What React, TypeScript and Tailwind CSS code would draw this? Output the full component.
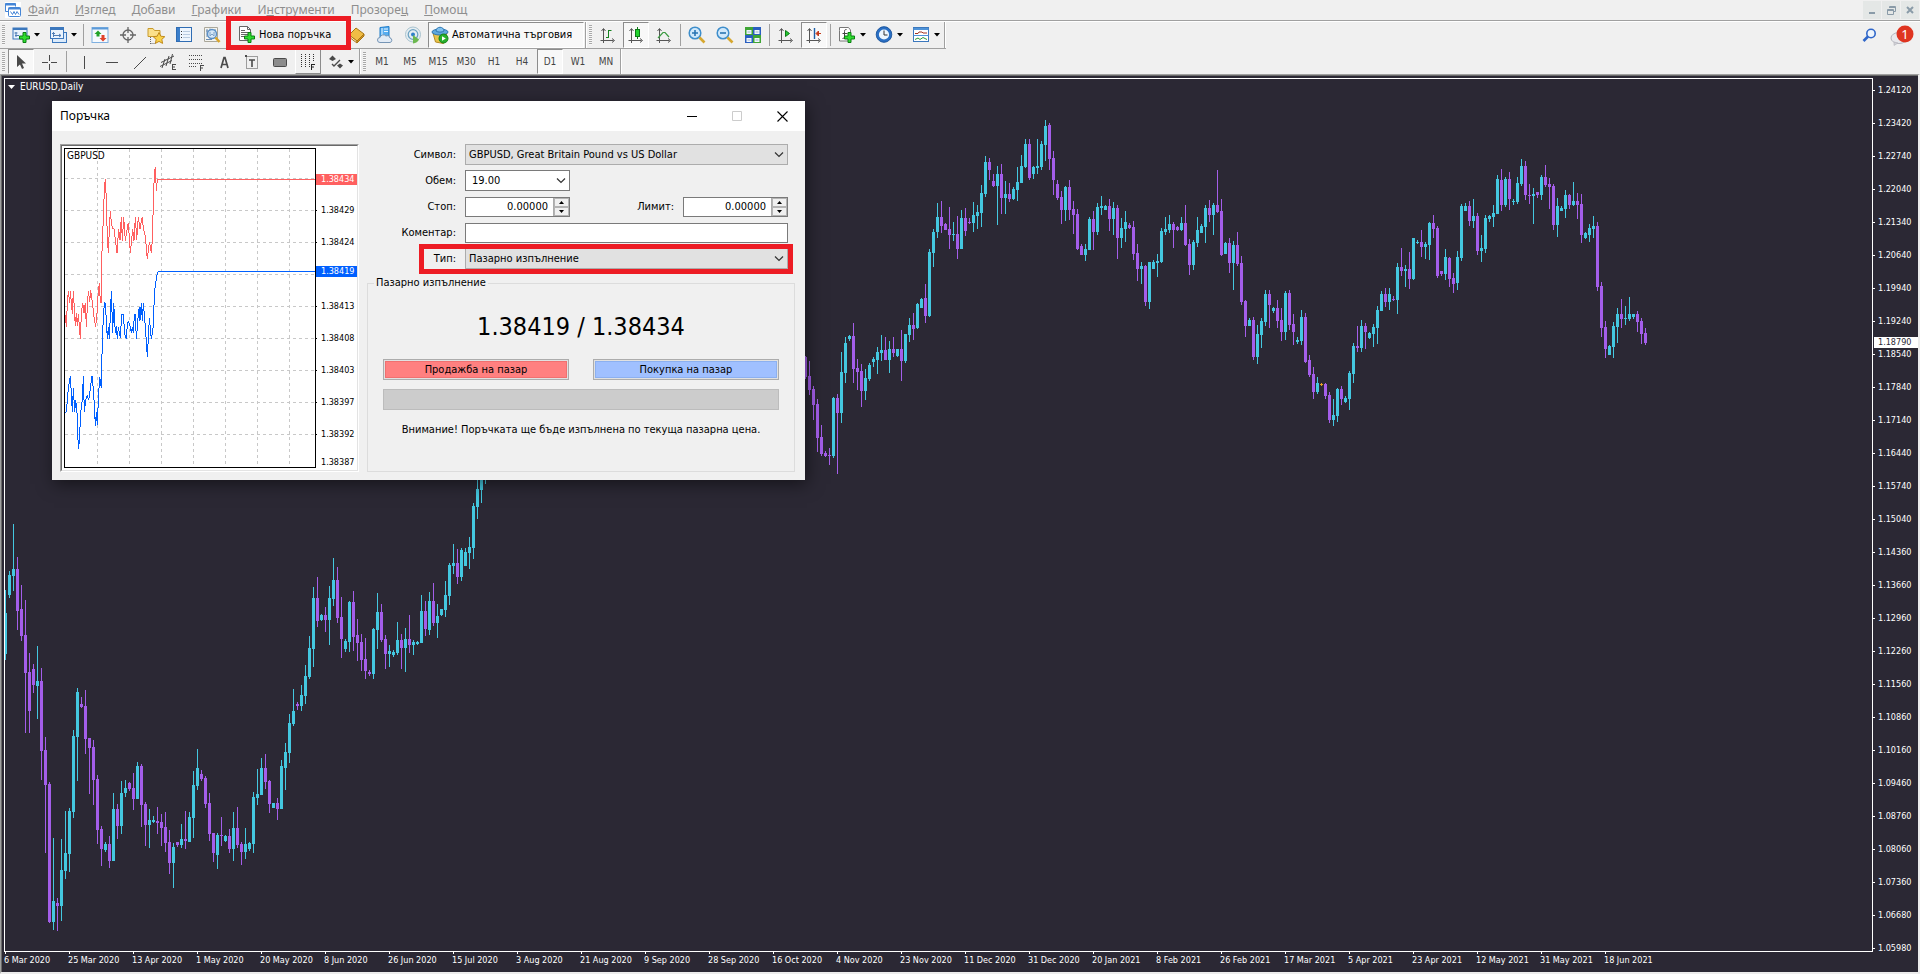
import type { ReactNode } from "react";

const UI = "font-['DejaVu_Sans_Condensed','Noto_Sans',sans-serif]";
const SEGOE = "font-['Noto_Sans','Open_Sans',sans-serif]";

/* ---------- market data ---------- */

// Each candle: direction (c = up, p = down, o = doji), high, body top, body bottom, low.
// Values are in sub-units of a third of a pixel, measured down from the group's origin.
const CANDLE_GROUPS = [
  {
    start: 0,
    origin: 421,
    rows:
      "c270 339 462 480;c213 225 285 294;c72 207 228 273;p171 207 333 390;p255 327 408 423;p300 405 519 699;p459 516 633 699;p492 507 555 579;c438 543 558 657;p504 543 753 840;p711 750 855 1059;p846 852 1266 1269;c1014 1203 1266 1290;p1194 1209 1218 1293;c1017 1110 1218 1263;c933 1059 1113 1137;c924 933 1062 1116;c690 708 936 954;c564 576 711 843;p591 612 621 624;p570 618 717 762;p714 714 744 882;p720 741 840 915;p825 837 990 1032;p978 987 1047 1098;c1026 1032 1050 1056;p1008 1032 1083 1104;c879 927 1083 1083;p912 927 978 1017;c843 879 978 1002;c840 864 879 891;p846 849 867 873;p819 864 897 930;c786 798 897 897;p792 798 915 981;p906 912 975 1038;c927 960 975 1044;c948 960 966 969;p921 963 969 1002;p942 966 984 1038;p936 981 1029 1056;p990 1026 1089 1122;c1029 1041 1089 1164;p1026 1026 1035 1041;c972 1017 1035 1044;p933 1017 1023 1047;c936 951 1026 1026;c813 855 954 1014;c747 804 858 870;p810 822 837 843;p828 834 912 924;p879 909 1002 1023;p999 999 1059 1086;c999 1005 1065 1107;p951 1005 1008 1038;c1005 1008 1023 1026;p987 1008 1047 1059;c936 984 1047 1083;p921 984 1035 1044;p1026 1032 1056 1095;c984 1032 1056 1077;c1026 1029 1047 1053;c876 891 1032 1059;c807 882 894 915;c774 804 885 885;p762 804 846 867;p840 843 912 939;c909 909 924 924;p894 909 927 960;c780 798 927 927;c729 756 804 870;c642 669 759 789;c567 633 672 678;p606 612 618 630;c555 585 618 633;c495 528 588 612;c408 444 531 537;c261 294 447 501;p231 294 363 381;c342 345 360 363;p321 345 360 396;c258 294 360 435;c174 240 297 318;p201 240 354 369;p291 351 417 474;c417 423 447 456;c303 306 426 456;p273 306 411 453;p357 405 429 483;p402 426 480 513;p414 477 513 537;p510 516 522 528;c384 387 522 537;c279 336 390 447;p312 336 420 426;p405 417 462 507;c435 453 462 501;c450 456 465 471;c366 420 459 465;p402 420 444 507;c384 417 444 516;p345 417 435 459;c420 426 435 465;c423 426 432 435;c285 333 429 429;p303 333 387 408;c276 303 390 405;p249 303 369 378;c312 348 369 414;c327 327 345 348;c243 285 330 351;c189 195 288 315;c132 189 198 222;p147 189 231 252;c144 150 231 243;c144 156 198 198;c111 141 159 207;c9 18 144 177;c-75 -33 21 57;c-90 -75 -30 9;c-90 -90 -60 -48",
  },
  {
    start: 200,
    origin: 21,
    rows:
      "p768 771 831 837;p783 828 870 885;p858 867 915 960;p897 912 1014 1056;p975 1011 1062 1068;p1053 1059 1068 1071;p1044 1065 1068 1095;c891 894 1068 1074;p882 894 939 1122;c756 816 939 969;c711 729 819 849;c705 708 717 723;p669 708 807 849;p777 804 816 870;p792 813 873 921;c807 834 873 900;c789 795 837 843;c771 777 786 801;c741 756 780 822;c705 750 759 783;p711 750 780 780;c723 747 780 819;p711 747 759 771;c747 747 768 771;p690 747 783 843;c702 702 783 789;c654 675 705 726;p639 675 687 720;c609 612 684 687;c594 597 624 624;p552 594 648 669;c447 456 648 651;c387 396 459 501;c309 351 396 414;p303 351 378 399;p369 372 390 390;p321 387 405 447;c366 402 405 423;p348 402 447 477;c330 354 447 447;p324 354 393 408;p354 366 369 372;c306 345 369 396;c315 336 348 387;c255 279 339 381;c168 186 282 291;p174 186 210 240;p222 243 258 261;c198 222 258 375;p192 222 294 342;c243 282 294 342;p249 282 297 306;c261 267 297 300;c201 246 270 303;c165 198 249 249;c117 132 201 204;p117 132 234 240;c198 201 222 237;c117 198 204 222;c123 132 201 210;c60 78 135 183;p69 75 177 210;p153 174 240 285;p240 252 294 300;p273 291 330 372;c258 261 330 363;p240 261 330 360;p303 327 345 402;p327 342 447 450;p432 438 465 465;c432 447 465 483;c351 357 450 450;p333 357 396 450;c309 321 396 405;c288 318 324 345;c315 318 330 330;p297 318 357 393;c306 324 357 405;p315 324 414 477;c354 384 414 444;c333 366 387 426;p369 375 384 387;p363 381 462 480;p432 459 507 543;c486 498 507 552;p495 498 606 618;c486 486 606 627;c480 486 507 507;c462 483 489 531",
  },
  {
    start: 289,
    origin: 51,
    rows:
      "c294 303 396 399;c261 297 306 315;c255 282 300 309;p276 282 300 354;p288 291 300 303;c261 279 300 303;p225 279 345 348;p327 342 405 435;c330 336 405 420;c261 300 339 351;c282 288 309 309;c225 234 291 339;p210 234 255 276;c219 225 255 315;p120 225 246 249;p207 243 375 378;c336 339 372 372;p324 339 399 429;c333 345 399 480;p306 345 402 408;p378 399 516 525;p510 513 588 621;c564 570 588 588;p561 570 681 690;c585 612 681 702;c564 573 615 654;c480 492 576 588;p480 492 525 594;c531 534 543 549;p510 534 573 594;p534 570 606 633;c483 489 606 630;p480 489 585 600;p552 582 606 645;c621 630 636 642;c540 561 633 645;p549 561 696 699;p675 690 735 741;p711 732 786 807;c741 759 786 792;o759 762 765 768;p759 762 798 807;p786 795 870 879;c807 855 870 888;c774 777 858 876;p768 777 807 825;c798 804 816 819;c723 729 807 840;c639 648 732 759;p588 648 654 666;c570 588 654 666;p579 588 606 657;c606 609 624 627;c582 591 612 651;c528 540 594 642;c483 492 543 543;p474 492 516 531;c474 492 516 540;p498 507 510 513;c399 411 510 552;p354 411 423 438;c405 417 423 471;p366 417 447 477;c324 324 447 450;c330 336 339 342;p300 336 351 381;c336 342 351 387;c276 279 345 390;p255 279 297 324;p288 294 438 444;p423 423 432 438;c357 381 432 450;p381 384 447 471;p429 444 462 489;c363 381 459 480;c222 228 384 393;c219 228 243 243;p213 228 273 288;c207 258 273 294;p249 258 363 375;c315 354 363 396;c255 264 357 369;c255 258 267 276;c225 249 261 291;c135 147 252 252;p117 150 225 243;c141 147 225 231;p126 147 207 240;c207 213 216 225;c141 159 216 222;c87 108 162 168;p93 108 195 210;p162 195 198 222;c174 192 198 282;p186 186 195 204;c135 141 195 210;p105 141 165 171;p144 162 171 237;p162 168 285 300;c204 228 285 321;c228 234 243 243;c180 195 237 264;p192 195 225 237;c156 213 225 228;p189 213 225 267;p192 222 315 339;c306 309 324 327;c282 294 315 336;c258 288 297 324;p276 288 471 483;p456 468 594 621;p573 591 657 684;c645 648 675 675;c576 588 651 684;c534 552 591 639;p507 552 567 594;c528 564 567 585;c501 552 567 573;c552 552 561 567;p543 552 576 606;p564 573 612 642;p594 609 639 645",
  },
];

const COLORS: Record<string, string> = { c: "#44c8e0", p: "#a45eea", o: "#e8a020" };

const CANDLES = CANDLE_GROUPS.flatMap((g) =>
  g.rows.split(";").map((row, i) => {
    const [high, top, bottom, low] = row
      .slice(1)
      .split(" ")
      .map((v) => g.origin + Math.round(Number(v) / 3));
    return { x: (g.start + i) * 4, color: COLORS[row[0]], high, top, bottom, low };
  })
);

const PRICES = [
  "1.24120", "1.23420", "1.22740", "1.22040", "1.21340", "1.20640", "1.19940", "1.19240", "1.18540",
  "1.17840", "1.17140", "1.16440", "1.15740", "1.15040", "1.14360", "1.13660", "1.12960", "1.12260",
  "1.11560", "1.10860", "1.10160", "1.09460", "1.08760", "1.08060", "1.07360", "1.06680", "1.05980",
];

const DATES = [
  "6 Mar 2020", "25 Mar 2020", "13 Apr 2020", "1 May 2020", "20 May 2020", "8 Jun 2020", "26 Jun 2020",
  "15 Jul 2020", "3 Aug 2020", "21 Aug 2020", "9 Sep 2020", "28 Sep 2020", "16 Oct 2020", "4 Nov 2020",
  "23 Nov 2020", "11 Dec 2020", "31 Dec 2020", "20 Jan 2021", "8 Feb 2021", "26 Feb 2021", "17 Mar 2021",
  "5 Apr 2021", "23 Apr 2021", "12 May 2021", "31 May 2021", "18 Jun 2021",
];

const ASK =
  "10,465 13,500 16,430 19,392 23,428 25,392 28,428 31,462 34,392 38,465 40,498 43,460 46,498 49,462 52,498 55,538 58,462 62,428 66,458 70,428 73,500 76,440 79,392 83,425 86,390 91,428 97,480 101,500 105,460 109,392 112,370 115,428 118,428 121,200 124,195 127,80 130,58 133,120 136,235 139,280 142,208 145,152 148,190 152,206 156,206 160,240 165,280 170,206 174,240 178,170 181,242 185,170 190,242 195,210 199,188 205,280 212,208 216,242 220,170 224,240 229,170 234,206 241,170 244,206 250,230 256,298 262,245 268,278 271,240 274,130 277,40 280,22 283,94 286,58 760,58";
const BID =
  "10,757 13,757 16,720 19,685 25,647 31,757 34,685 38,757 41,720 45,757 49,868 52,845 56,757 61,720 64,647 67,757 71,720 76,705 80,720 85,685 90,647 95,700 100,797 103,757 106,795 109,720 113,650 118,685 121,530 127,428 130,430 136,538 139,500 142,538 148,392 152,520 155,428 160,520 163,498 166,538 169,500 175,535 179,463 184,463 188,520 193,538 196,490 199,482 205,500 208,520 211,500 214,520 217,463 220,463 223,538 229,463 232,440 234,482 238,428 241,482 244,428 250,500 256,592 262,475 268,538 274,498 277,405 280,375 286,340 290,334 760,334";

/* ---------- icons ---------- */

function Svg({ children, s = 18 }: { children: ReactNode; s?: number }) {
  return (
    <svg width={s} height={s} viewBox={`0 0 ${s} ${s}`} fill="none" aria-hidden="true" className="shrink-0">
      {children}
    </svg>
  );
}

function Plus({ x, y }: { x: number; y: number }) {
  return (
    <path
      transform={`translate(${x} ${y})`}
      d="M4 .5h3v3.500h3.500v3H7v3.500H4V7H.5V4H4z"
      fill="#2fdd2f"
      stroke="#0a7d12"
    />
  );
}

function Axes() {
  return (
    <path d="M4.500 3v14M1.500 14.500h13M2.500 5l2-2.500 2 2.500M13 12.500l2.500 2-2.500 2" stroke="#555" />
  );
}

const ICONS: Record<string, ReactNode> = {
  app: (
    <Svg s={16}>
      <rect width="16" height="16" fill="#fff" />
      <path d="M.5 1.500h10v3M.5 1.500v8h3" stroke="#4585d6" />
      <path d="M.5 2.500h10" stroke="#4585d6" strokeWidth="2" />
      <rect x="3.500" y="5.500" width="12" height="9" rx="1" fill="#fff" stroke="#4585d6" />
      <path d="M3.500 6.500h12" stroke="#4585d6" strokeWidth="2" />
      <path d="M5.500 9.500l2 3 1.500-3 1.500 3 1.500-3 2 3" stroke="#4585d6" />
    </Svg>
  ),
  newChart: (
    <Svg>
      <rect x="1" y="2" width="14" height="11" fill="#eaf3fd" stroke="#3c78bd" />
      <path d="M1 3h14" stroke="#3c78bd" strokeWidth="2" />
      <path d="M4 6v5M3 9.500h4M2.500 7h3" stroke="#4f7db5" />
      <Plus x={7} y={6} />
    </Svg>
  ),
  profiles: (
    <Svg>
      <rect x="3.500" y="6.500" width="14" height="10" fill="#dcebfb" stroke="#3c78bd" />
      <rect x="1.500" y="1.500" width="13" height="11" fill="#eaf3fd" stroke="#3c78bd" />
      <path d="M1 3h14" stroke="#3c78bd" strokeWidth="2" />
      <path d="M4.500 6v5M3 7.500h3M4 9.500h8M10 8l2 1.500-2 1.500" stroke="#4f7db5" />
    </Svg>
  ),
  watch: (
    <Svg>
      <rect x="1" y="1.500" width="16" height="15" fill="#f6fafe" stroke="#7fb0e0" />
      <path d="M1 2.500h16" stroke="#5c9ad8" strokeWidth="2" />
      <path d="M7 4.500L10.500 8H8.500v2.500h-3V8h-2z" fill="#22a32a" />
      <path d="M12 15.500L8.500 12h2V9h3v3h2z" fill="#e0432c" />
    </Svg>
  ),
  target: (
    <Svg>
      <circle cx="9" cy="9" r="5" stroke="#666" strokeWidth="1.300" />
      <path d="M9 1v6M9 11v6M1 9h6M11 9h6" stroke="#666" strokeWidth="1.300" />
    </Svg>
  ),
  folder: (
    <Svg s={20}>
      <path d="M2 3.500h5l1.500 2H14v6H2z" fill="#fbe08a" stroke="#c89a2c" />
      <path d="M4.500 12v7M4.500 18.500h5" stroke="#666" strokeDasharray="1 1" />
      <path d="M13 7.500l1.800 3.700 4 .5-3 2.700.8 4-3.600-2-3.600 2 .8-4-3-2.700 4-.5z" fill="#fad34a" stroke="#c18a1a" />
    </Svg>
  ),
  panel: (
    <Svg>
      <rect x="1.500" y="1.500" width="15" height="14" fill="#eef5fd" stroke="#2f6cb3" />
      <rect x="2" y="2" width="3" height="13" fill="#3b7fcb" />
      <path d="M8 5.500h7M8 8.500h7M8 11.500h7" stroke="#b9cbe0" />
      <path d="M6 5.500h1M6 8.500h1M6 11.500h1" stroke="#333" />
    </Svg>
  ),
  tester: (
    <Svg>
      <path d="M1.500 1.500h13v14h-13z" fill="#f4f4f0" stroke="#aaa79a" />
      <path d="M4 3v8M3 5h2M7 2.500v3M12 3v4M3 13.500h6" stroke="#6c8cb0" />
      <circle cx="9" cy="8" r="4.500" fill="#cfe5fa" fillOpacity=".8" stroke="#5b8fc6" strokeWidth="1.400" />
      <path d="M7 6v4l2-2 2 2V6" stroke="#7fa3c8" />
      <path d="M12.500 11.500l4 4.500" stroke="#d9a52b" strokeWidth="2.600" />
    </Svg>
  ),
  order: (
    <Svg>
      <path d="M1.500.5h8l3 3v11h-11z" fill="#fff" stroke="#666" />
      <path d="M9.500.5v3h3M3 4.500h4M3 6.500h7M3 8.500h7M3 10.500h4" stroke="#666" />
      <Plus x={6} y={6} />
    </Svg>
  ),
  book: (
    <Svg>
      <path d="M1 9l7-7 8 6-7 7z" fill="#f0bd45" stroke="#a87514" />
      <path d="M1 9l8 6v2L1 11z" fill="#fff3cf" stroke="#a87514" />
      <path d="M9 15l7-7v2l-7 7z" fill="#cf9324" stroke="#a87514" />
    </Svg>
  ),
  cloud: (
    <Svg>
      <path d="M4 1.500l9-1v11H4z" fill="#58aef0" stroke="#1e7cc9" />
      <path d="M8 3h4M8 5.500h4M6 2v9" stroke="#e9f5ff" />
      <path d="M4 16.500a2.500 2.500 0 010-5 3.500 3.500 0 016-1.500 3 3 0 014 2 2.300 2.300 0 010 4.500z" fill="#e2ebf5" stroke="#7695b5" />
    </Svg>
  ),
  signal: (
    <Svg>
      <circle cx="9" cy="8.500" r="7.500" fill="#e6eef2" stroke="#a9c3cf" />
      <circle cx="9" cy="8.500" r="4.800" stroke="#6fa3c2" strokeWidth="1.300" />
      <circle cx="9" cy="8.500" r="2" fill="#2f80c8" />
      <path d="M9 9v8.500c3-.5 5-1.500 6-4z" fill="#6cb84f" />
    </Svg>
  ),
  auto: (
    <Svg>
      <path d="M2 7l2.500 9 8 1.500L16 7z" fill="#e9c34c" stroke="#b48a22" />
      <ellipse cx="9" cy="6" rx="8" ry="3" fill="#5fa8dd" stroke="#2d76b1" />
      <path d="M5 5c0-5 8-5 8 0-2 1.500-6 1.500-8 0z" fill="#7fc0ee" stroke="#2d76b1" />
      <circle cx="12.500" cy="12.500" r="4.500" fill="#27b02c" stroke="#12821a" />
      <path d="M11 10.300v4.400l3.800-2.200z" fill="#fff" />
    </Svg>
  ),
  bars: (
    <Svg>
      <Axes />
      <path d="M9.500 4v8M9.500 4.500h3M7 11.500h3" stroke="#15831f" />
    </Svg>
  ),
  candles: (
    <Svg>
      <Axes />
      <path d="M10.500 1v12" stroke="#0d7a17" />
      <rect x="8.500" y="3.500" width="4" height="7" fill="#20d32c" stroke="#0d7a17" />
    </Svg>
  ),
  line: (
    <Svg>
      <Axes />
      <path d="M3 12l5-5.500h2L14 11" stroke="#3a9a41" strokeWidth="1.200" />
    </Svg>
  ),
  zoomIn: (
    <Svg>
      <circle cx="7" cy="7" r="5.800" fill="#cfe8fb" stroke="#3e8ecb" strokeWidth="1.500" />
      <path d="M4 7h6M7 4v6" stroke="#2874b3" strokeWidth="1.600" />
      <path d="M11.500 11.500l5 5" stroke="#d6a72f" strokeWidth="2.600" />
    </Svg>
  ),
  zoomOut: (
    <Svg>
      <circle cx="7" cy="7" r="5.800" fill="#cfe8fb" stroke="#3e8ecb" strokeWidth="1.500" />
      <path d="M4 7h6" stroke="#2874b3" strokeWidth="1.600" />
      <path d="M11.500 11.500l5 5" stroke="#d6a72f" strokeWidth="2.600" />
    </Svg>
  ),
  tile: (
    <Svg>
      <path d="M1 1h8v8H1zM9 9h8v8H9z" fill="#3fa535" />
      <path d="M9 1h8v8H9zM1 9h8v8H1z" fill="#2a5fc0" />
      <path d="M2.500 4h5v4h-5zM10.500 4h5v4h-5zM2.500 12h5v4h-5zM10.500 12h5v4h-5z" fill="#f2f7fd" />
      <path d="M3.500 6h3M11.500 6h3M3.500 14h3M11.500 14h3" stroke="#9cb3cf" />
    </Svg>
  ),
  scroll: (
    <Svg>
      <Axes />
      <path d="M8.500 4.500v6l4-3z" fill="#22c92e" stroke="#0d7a17" />
    </Svg>
  ),
  shift: (
    <Svg>
      <Axes />
      <path d="M9.500 2v11" stroke="#1d5fa8" strokeWidth="1.400" />
      <path d="M16 7.500h-4M13.500 5L11 7.500l2.500 2.500z" stroke="#c43a1a" fill="#c43a1a" />
    </Svg>
  ),
  indicators: (
    <Svg>
      <path d="M1.500 4.500v-3h9l2 2.500v11h-11z" fill="#fff" stroke="#777" />
      <path d="M8.500 3.500c-2 0-2 1-2 2v5c0 1-.5 2-2 2M4.500 7.500h5" stroke="#444" />
      <Plus x={6} y={6} />
    </Svg>
  ),
  clock: (
    <Svg>
      <circle cx="9" cy="8.500" r="6.500" fill="#edf6ff" stroke="#2a6fc4" strokeWidth="2.800" />
      <circle cx="9" cy="8.500" r="7.800" stroke="#174f96" strokeWidth=".8" />
      <path d="M9 4.500v4.500h3.500" stroke="#333" />
    </Svg>
  ),
  template: (
    <Svg>
      <rect x="1.500" y="1.500" width="15" height="14" fill="#fff" stroke="#3c78bd" />
      <path d="M1.500 3h15" stroke="#4f93d8" strokeWidth="2" />
      <path d="M1.500 9.500h15" stroke="#4f93d8" />
      <path d="M3 7.500h3l1-1.500h3l1 1h4" stroke="#a3331f" />
      <path d="M3 13.500l3-1.500 2 1.500 3-2 4 2" stroke="#2b9a35" />
    </Svg>
  ),
  cursor: (
    <Svg s={16}>
      <path d="M4 1v12l3-2.500L9 15l2-1-2-4.500h4z" fill="#4a4a4a" />
    </Svg>
  ),
  cross: (
    <Svg s={16}>
      <path d="M8.500 1v6M8.500 10v6M1 8.500h6M10 8.500h6" stroke="#4a4a4a" />
    </Svg>
  ),
  vline: (
    <Svg s={16}>
      <path d="M8.500 2v13" stroke="#4a4a4a" />
    </Svg>
  ),
  hline: (
    <Svg s={16}>
      <path d="M2 8.500h12" stroke="#4a4a4a" />
    </Svg>
  ),
  trend: (
    <Svg s={16}>
      <path d="M2 15L14 3" stroke="#4a4a4a" />
    </Svg>
  ),
  channel: (
    <Svg s={18}>
      <path d="M2 9.500L15 3M1 13.500L13 7.500M3 15l3-9M7 13l3-10M11 11l2.500-10" stroke="#4a4a4a" />
      <path d="M13 11.500h4M13 14h3M13 16.500h4M13.500 11v6" stroke="#4a4a4a" />
    </Svg>
  ),
  fibo: (
    <Svg s={18}>
      <path d="M2 2.500h14M2 6.500h14M2 10.500h14M2 13.500h8" stroke="#4a4a4a" strokeDasharray="1 1" />
      <path d="M13.500 12v6M13 12.500h4M13 15h3" stroke="#4a4a4a" />
    </Svg>
  ),
  textA: (
    <Svg s={16}>
      <path d="M5 14L8 3.500h1L12 14M6 10.500h5" stroke="#4a4a4a" strokeWidth="1.700" />
    </Svg>
  ),
  label: (
    <Svg s={16}>
      <rect x="2.500" y="2.500" width="11" height="12" stroke="#4a4a4a" strokeDasharray="1 1" />
      <path d="M5 6h6M8 6v7" stroke="#4a4a4a" strokeWidth="1.600" />
      <path d="M1 1h2v2H1z" fill="#4a4a4a" />
    </Svg>
  ),
  rect: (
    <Svg s={16}>
      <rect x="1.500" y="4.500" width="13" height="8" rx="1" fill="#8c8c8c" stroke="#4a4a4a" />
    </Svg>
  ),
  cycles: (
    <Svg s={18}>
      <path d="M2.500 1v14M6.500 1v14M10.500 1v14M14.500 1v8" stroke="#333" strokeDasharray="1 1" />
      <path d="M12.500 11v6M12 11.500h4M12 14h3" stroke="#222" />
    </Svg>
  ),
  arrows: (
    <Svg s={16}>
      <path d="M1 5l3.500-3.500L8 5 4.500 7zM9 11.500l3-2 3 2-3 3z" fill="#4a4a4a" />
      <path d="M4 10l2 2 6-6" stroke="#4a4a4a" strokeWidth="1.400" />
    </Svg>
  ),
};

/* ---------- toolbar parts ---------- */

function Caret() {
  return (
    <svg width="6" height="4" viewBox="0 0 6 4" aria-hidden="true" className="shrink-0">
      <path d="M0 0h6L3 3.500z" fill="#000" />
    </svg>
  );
}

const Grip = () => (
  <div className="w-[7px] shrink-0 py-[3px] pl-0.5">
    <div className="h-full w-[3px] bg-[repeating-linear-gradient(to_bottom,#a8a8a8_0_1px,#f8f8f8_1px_2px)]" />
  </div>
);

const Sep = () => (
  <div className="flex w-[5px] shrink-0 justify-center py-0.5">
    <div className="w-px bg-[#a0a0a0]" />
  </div>
);

const End = () => <div className="w-0.5 shrink-0 border-r border-l border-r-white border-l-[#a0a0a0]" />;

function Tool({ icon, label, on, raised }: { icon: string; label: string; on?: boolean; raised?: boolean }) {
  const look = on
    ? "border-t-[#8c8c8c] border-l-[#8c8c8c] border-r-white border-b-white bg-[#f8f8f8]"
    : raised
      ? "border-t-white border-l-white border-r-[#8c8c8c] border-b-[#8c8c8c]"
      : "border-transparent";
  return (
    <div className="flex w-7 shrink-0 px-px">
      <button type="button" aria-label={label} className={`flex flex-1 items-center justify-center border ${look}`}>
        {ICONS[icon]}
      </button>
    </div>
  );
}

function DropTool({ icon, label }: { icon: string; label: string }) {
  return (
    <button type="button" aria-label={label} className="flex w-[37px] shrink-0 items-center justify-center gap-1">
      {ICONS[icon]}
      <Caret />
    </button>
  );
}

const MENU: [string, string, string][] = [
  ["", "Ф", "айл"],
  ["", "И", "зглед"],
  ["", "Д", "обави"],
  ["", "Г", "рафики"],
  ["И", "н", "струменти"],
  ["Прозоре", "ц", ""],
  ["", "П", "омощ"],
];

function MenuBar() {
  return (
    <div className={`flex h-[22px] shrink-0 border-b border-b-white ${SEGOE}`}>
      <div className="flex flex-1 items-center border-b border-[#a0a0a0] pr-px pl-[5px]">
        {ICONS.app}
        <nav className="ml-[7px] flex flex-1 gap-4 text-[12px] leading-5 text-[#8e8e8e]">
          {MENU.map(([a, u, b]) => (
            <button type="button" key={a + u + b}>
              {a}
              <span className="underline">{u}</span>
              {b}
            </button>
          ))}
        </nav>
        <div className="flex gap-px text-[#8a9ba8]">
          <button type="button" aria-label="Минимизирай" className="flex h-[18px] w-[18px] items-center justify-center bg-[#e4e7e6]">
            <svg width="8" height="8" aria-hidden="true"><path d="M1 7h6" stroke="currentColor" strokeWidth="2" /></svg>
          </button>
          <button type="button" aria-label="Възстанови" className="flex h-[18px] w-[18px] items-center justify-center bg-[#e4e7e6]">
            <svg width="9" height="9" fill="none" stroke="currentColor" aria-hidden="true"><path d="M2.500 2V.5h6v5H7M.5 3.500h6v5h-6zM.5 4.500h6M2.500 1.500h6" /></svg>
          </button>
          <button type="button" aria-label="Затвори" className="flex h-[18px] w-[18px] items-center justify-center bg-[#e4e7e6]">
            <svg width="8" height="8" aria-hidden="true"><path d="M1 1l6 6M7 1L1 7" stroke="currentColor" strokeWidth="2" /></svg>
          </button>
        </div>
      </div>
    </div>
  );
}

function MainToolbar() {
  return (
    <div className="flex h-[27px] shrink-0">
      <div className="flex border-b border-[#a0a0a0]">
        <Grip />
        <DropTool icon="newChart" label="Нова графика" />
        <DropTool icon="profiles" label="Профили" />
        <Sep />
        <Tool icon="watch" label="Пазарен преглед" />
        <Tool icon="target" label="Данни" />
        <Tool icon="folder" label="Навигатор" />
        <Tool icon="panel" label="Терминал" />
        <Tool icon="tester" label="Тестер" />
        <div className="relative flex w-[117px] shrink-0">
          <button type="button" className={`flex flex-1 items-center gap-[3px] pl-3 text-[11px] ${UI}`}>
            {ICONS.order}
            <span className="whitespace-nowrap">Нова поръчка</span>
          </button>
          <div className="pointer-events-none absolute -top-1.5 left-0 z-10 h-[34px] w-[125px] border-[5px] border-[#ed1c24]" />
        </div>
        <Tool icon="book" label="Редактор" />
        <Tool icon="cloud" label="Облак" />
        <Tool icon="signal" label="Сигнали" />
        <button
          type="button"
          className={`mx-px flex w-[156px] shrink-0 items-center gap-[3px] border border-t-[#8c8c8c] border-r-white border-b-white border-l-[#8c8c8c] bg-[#f8f8f8] pl-0.5 text-[11px] ${UI}`}
        >
          {ICONS.auto}
          <span className="whitespace-nowrap">Автоматична търговия</span>
        </button>
        <End />
        <Grip />
        <Tool icon="bars" label="Барове" />
        <Tool icon="candles" label="Свещи" on />
        <Tool icon="line" label="Линия" />
        <Sep />
        <Tool icon="zoomIn" label="Увеличи" />
        <Tool icon="zoomOut" label="Намали" />
        <Tool icon="tile" label="Подреди" />
        <Sep />
        <Tool icon="scroll" label="Автоматично превъртане" />
        <Tool icon="shift" label="Отместване" on />
        <Sep />
        <DropTool icon="indicators" label="Индикатори" />
        <DropTool icon="clock" label="Периоди" />
        <DropTool icon="template" label="Шаблони" />
        <End />
      </div>
      <div className="flex flex-1 items-center justify-end gap-3 pr-1.5">
        <button type="button" aria-label="Търсене">
          <svg width="15" height="15" viewBox="0 0 15 15" fill="none" aria-hidden="true">
            <circle cx="9" cy="5.500" r="4.200" fill="#eef5fd" stroke="#2f66c9" strokeWidth="1.600" />
            <path d="M6 8.500l-4.500 4.500" stroke="#2f66c9" strokeWidth="2.600" />
          </svg>
        </button>
        <button type="button" aria-label="Съобщения" className="relative h-[22px] w-[25px]">
          <svg width="25" height="22" viewBox="0 0 25 22" fill="none" aria-hidden="true">
            <ellipse cx="10" cy="13" rx="8" ry="5.500" fill="#e9e9ed" stroke="#b5b5bd" />
            <path d="M5 17v3.500l4-2.500z" fill="#d0d0d6" stroke="#b5b5bd" strokeWidth=".6" />
            <circle cx="16" cy="9" r="8.500" fill="#df3420" />
          </svg>
          <span className={`absolute top-0 right-0 w-[18px] text-center text-[13px] leading-[18px] text-white ${SEGOE}`}>1</span>
        </button>
      </div>
    </div>
  );
}

const PERIODS = ["M1", "M5", "M15", "M30", "H1", "H4", "D1", "W1", "MN"];

function DrawToolbar() {
  return (
    <div className="flex h-[25px] shrink-0">
      <div className="flex">
        <Grip />
        <Tool icon="cursor" label="Курсор" on />
        <Tool icon="cross" label="Кръст" />
        <div className="flex px-px">
          <Sep />
        </div>
        <Tool icon="vline" label="Вертикална линия" />
        <Tool icon="hline" label="Хоризонтална линия" />
        <Tool icon="trend" label="Трендова линия" />
        <Tool icon="channel" label="Канал" />
        <Tool icon="fibo" label="Фибоначи" />
        <Tool icon="textA" label="Текст" />
        <Tool icon="label" label="Етикет" />
        <Tool icon="rect" label="Правоъгълник" />
        <Tool icon="cycles" label="Времеви зони" raised />
        <DropTool icon="arrows" label="Стрелки" />
        <End />
        <Grip />
        {PERIODS.map((p) => (
          <div key={p} className="flex w-7 shrink-0 px-px">
            <button
              type="button"
              className={
                p === "D1"
                  ? `flex-1 border border-t-[#8c8c8c] border-r-white border-b-white border-l-[#8c8c8c] bg-[#f8f8f8] text-[10px] text-[#444] ${UI}`
                  : `flex-1 border border-transparent text-[10px] text-[#444] ${UI}`
              }
            >
              {p}
            </button>
          </div>
        ))}
        <End />
      </div>
    </div>
  );
}

/* ---------- order dialog ---------- */

function Chevron() {
  return (
    <svg width="10" height="6" viewBox="0 0 10 6" fill="none" stroke="#333" strokeWidth="1.200" aria-hidden="true" className="pointer-events-none absolute top-2 right-1">
      <path d="M1 .5l4 4 4-4" />
    </svg>
  );
}

const TICKS = ["1.38434", "1.38429", "1.38424", "1.38418", "1.38413", "1.38408", "1.38403", "1.38397", "1.38392"];

function TickChart() {
  return (
    <div className="w-[299px] shrink-0 border border-t-[#a0a0a0] border-r-white border-b-white border-l-[#a0a0a0]">
      <div className="flex h-full border border-t-[#696969] border-r-[#e3e3e3] border-b-[#e3e3e3] border-l-[#696969] bg-white pt-0.5 pl-0.5">
        <svg width="252" height="320" viewBox="0 0 252 320" fill="none" shapeRendering="crispEdges" className="shrink-0">
          <g stroke="#c8c8c8" strokeDasharray="3 3">
            {[33, 65, 97, 129, 161, 193, 225].map((x) => (
              <path key={x} d={`M${x}.5 1V319`} />
            ))}
            {[30, 62, 94, 126, 158, 190, 222, 254, 286].map((y) => (
              <path key={y} d={`M1 ${y}.5H251`} />
            ))}
          </g>
          <g transform="translate(-2 12) scale(.33333)" strokeWidth="3">
            <polyline points={ASK} stroke="#ff6060" />
            <polyline points={BID} stroke="#0060ff" />
          </g>
          <rect x=".5" y=".5" width="251" height="319" stroke="#000" />
          <text x="3" y="11" fill="#000" className={`text-[10px] ${UI}`}>GBPUSD</text>
        </svg>
        <div className={`relative flex-1 pt-[14px] text-[9px] ${UI}`}>
          {TICKS.map((t) => (
            <div key={t} className="flex h-8 items-center">
              <span className="h-px w-px bg-black" />
              <span className="pl-1 leading-3">{t}</span>
            </div>
          ))}
          <div className="h-4 pl-[5px] leading-6">1.38387</div>
          <div className="absolute top-[26px] left-0 w-[41px] bg-[#ff6060] pl-[5px] leading-[11px] text-white">1.38434</div>
          <div className="absolute top-[118px] left-0 w-[41px] bg-[#0060ff] pl-[5px] leading-[11px] text-white">1.38419</div>
        </div>
      </div>
    </div>
  );
}

function PriceField({ id }: { id: string }) {
  return (
    <div className="flex h-5 w-[105px] border border-[#7a7a7a] bg-white">
      <input id={id} defaultValue="0.00000" className="min-w-0 flex-1 pr-[5px] text-right outline-none" />
      <div className="flex w-4 flex-col border-l border-[#acacac] bg-[#f0f0f0]">
        <button type="button" aria-label="Увеличи" className="flex flex-1 items-center justify-center border border-[#b4b4b4]">
          <svg width="5" height="3" aria-hidden="true"><path d="M0 3h5L2.500 0z" /></svg>
        </button>
        <button type="button" aria-label="Намали" className="flex flex-1 items-center justify-center border border-[#b4b4b4]">
          <svg width="5" height="3" aria-hidden="true"><path d="M0 0h5L2.500 3z" /></svg>
        </button>
      </div>
    </div>
  );
}

function OrderDialog() {
  const row = "flex h-[21px] items-center gap-[9px]";
  const label = "w-[89px] shrink-0 text-right";
  return (
    <section aria-label="Поръчка" className="absolute top-[26px] left-[51px] w-[753px] bg-[#f0f0f0] text-black shadow-[2px_4px_16px_rgba(0,0,0,0.5)]">
      <header className={`flex h-[30px] items-center bg-white pl-2 text-[12px] ${SEGOE}`}>
        <h1 className="flex-1">Поръчка</h1>
        <button type="button" aria-label="Минимизирай" className="flex h-full w-[45px] items-center justify-center">
          <svg width="10" height="10" aria-hidden="true"><path d="M0 5.500h10" stroke="#000" /></svg>
        </button>
        <button type="button" aria-label="Максимизирай" disabled className="flex h-full w-[45px] items-center justify-center">
          <svg width="10" height="10" fill="none" aria-hidden="true"><path d="M.5.5h9v9h-9z" stroke="#ccc" /></svg>
        </button>
        <button type="button" aria-label="Затвори" className="flex h-full w-[46px] items-center justify-center">
          <svg width="11" height="11" aria-hidden="true"><path d="M.5.5l10 10M10.500.5l-10 10" stroke="#000" strokeWidth="1.100" /></svg>
        </button>
      </header>
      <div className={`flex gap-2 pt-[13px] pr-[10px] pb-2 pl-2 text-[11px] leading-4 ${UI}`}>
        <TickChart />
        <form className="flex flex-1 flex-col">
          <div className="flex flex-col gap-[5px] pr-[7px]">
            <div className={row}>
              <label htmlFor="symbol" className={label}>Символ:</label>
              <div className="relative flex-1">
                <select id="symbol" className="block h-[21px] w-full appearance-none border border-[#acacac] bg-[#e1e1e1] pl-[3px]">
                  <option>GBPUSD, Great Britain Pound vs US Dollar</option>
                </select>
                <Chevron />
              </div>
            </div>
            <div className={row}>
              <label htmlFor="volume" className={label}>Обем:</label>
              <div className="relative w-[105px]">
                <select id="volume" className="block h-[21px] w-full appearance-none border border-[#7a7a7a] bg-white pl-1.5">
                  <option>19.00</option>
                </select>
                <Chevron />
              </div>
            </div>
            <div className={row}>
              <label htmlFor="stop" className={label}>Стоп:</label>
              <PriceField id="stop" />
              <label htmlFor="limit" className="flex-1 text-right">Лимит:</label>
              <PriceField id="limit" />
            </div>
            <div className={row}>
              <label htmlFor="comment" className={label}>Коментар:</label>
              <input id="comment" className="h-5 min-w-0 flex-1 border border-[#7a7a7a] bg-white px-1 outline-none" />
            </div>
            <div className={`relative ${row}`}>
              <label htmlFor="type" className={label}>Тип:</label>
              <div className="relative flex-1">
                <select id="type" className="block h-[21px] w-full appearance-none border border-[#acacac] bg-[#e1e1e1] pl-[3px]">
                  <option>Пазарно изпълнение</option>
                </select>
                <Chevron />
              </div>
              <div className="pointer-events-none absolute -top-1 -right-[5px] -bottom-[5px] left-[52px] border-[5px] border-[#ed1c24]" />
            </div>
          </div>
          <fieldset className="mt-1.5 min-h-[197px] flex-1 border border-[#dcdcdc] px-[15px]">
            <legend className="-ml-[9px] px-0.5">Пазарно изпълнение</legend>
            <div className="mt-5 text-center text-[25px] leading-8">1.38419 / 1.38434</div>
            <div className="mt-4 flex gap-6">
              <button type="button" className="h-[21px] flex-1 border border-[#acacac] bg-[#e1e1e1] p-px">
                <span className="flex h-full items-center justify-center border border-[#f07070] bg-[#ff8080]">Продажба на пазар</span>
              </button>
              <button type="button" className="h-[21px] flex-1 border border-[#acacac] bg-[#e1e1e1] p-px">
                <span className="flex h-full items-center justify-center border border-[#8cb0f0] bg-[#a0c0ff]">Покупка на пазар</span>
              </button>
            </div>
            <div className="mt-[9px] h-[21px] border border-[#bcbcbc] bg-[#ccc]" />
            <p className="mt-3 text-center whitespace-nowrap">Внимание! Поръчката ще бъде изпълнена по текуща пазарна цена.</p>
          </fieldset>
        </form>
      </div>
    </section>
  );
}

/* ---------- chart window ---------- */

function ChartWindow() {
  return (
    <main className={`relative flex min-h-0 flex-1 border-t border-r-2 border-b-2 border-l border-t-[#a0a0a0] border-r-[#ececec] border-b-[#ececec] border-l-[#a0a0a0] text-[9px] text-white ${UI}`}>
      <div className="flex min-w-0 flex-1 border-t border-l border-[#696969] bg-[#2b2834]">
        <div className="flex min-w-0 flex-1 flex-col pt-0.5 pl-0.5">
          <div className="relative min-h-0 flex-1 border border-white">
            <svg className="absolute inset-0 h-full w-full" shapeRendering="crispEdges" aria-hidden="true">
              {CANDLES.map((c) => (
                <g key={c.x} fill={c.color}>
                  <rect x={c.x} y={c.high} width="1" height={c.low - c.high} />
                  <rect x={c.x - 1} y={c.top} width="3" height={c.bottom - c.top} />
                </g>
              ))}
            </svg>
            <div className="relative flex items-center gap-[5px] pt-0.5 pl-[3px] text-[10px] leading-3">
              <svg width="7" height="4" aria-hidden="true"><path d="M0 0h7L3.500 4z" fill="#fff" /></svg>
              EURUSD,Daily
            </div>
          </div>
          <div className="flex h-5 shrink-0 overflow-hidden">
            {DATES.map((d) => (
              <div key={d} className="w-16 shrink-0 whitespace-nowrap">
                <div className="ml-px h-0.5 w-px bg-white" />
                <div className="leading-3">{d}</div>
              </div>
            ))}
          </div>
        </div>
        <div className="relative flex w-[45px] shrink-0 flex-col justify-between pt-2 pb-[18px]">
          {PRICES.map((p) => (
            <div key={p} className="flex h-3 items-center gap-[3px]">
              <span className="h-px w-0.5 bg-white" />
              <span className="leading-3">{p}</span>
            </div>
          ))}
          <div className="absolute top-[261px] left-px w-11 bg-white pl-1 leading-[11px] text-[#2b2834]">1.18790</div>
        </div>
      </div>
      <OrderDialog />
    </main>
  );
}

export default function App() {
  return (
    <div className="flex h-screen min-h-[600px] flex-col overflow-hidden bg-[#f0f0f0] text-black">
      <MenuBar />
      <MainToolbar />
      <DrawToolbar />
      <ChartWindow />
    </div>
  );
}
